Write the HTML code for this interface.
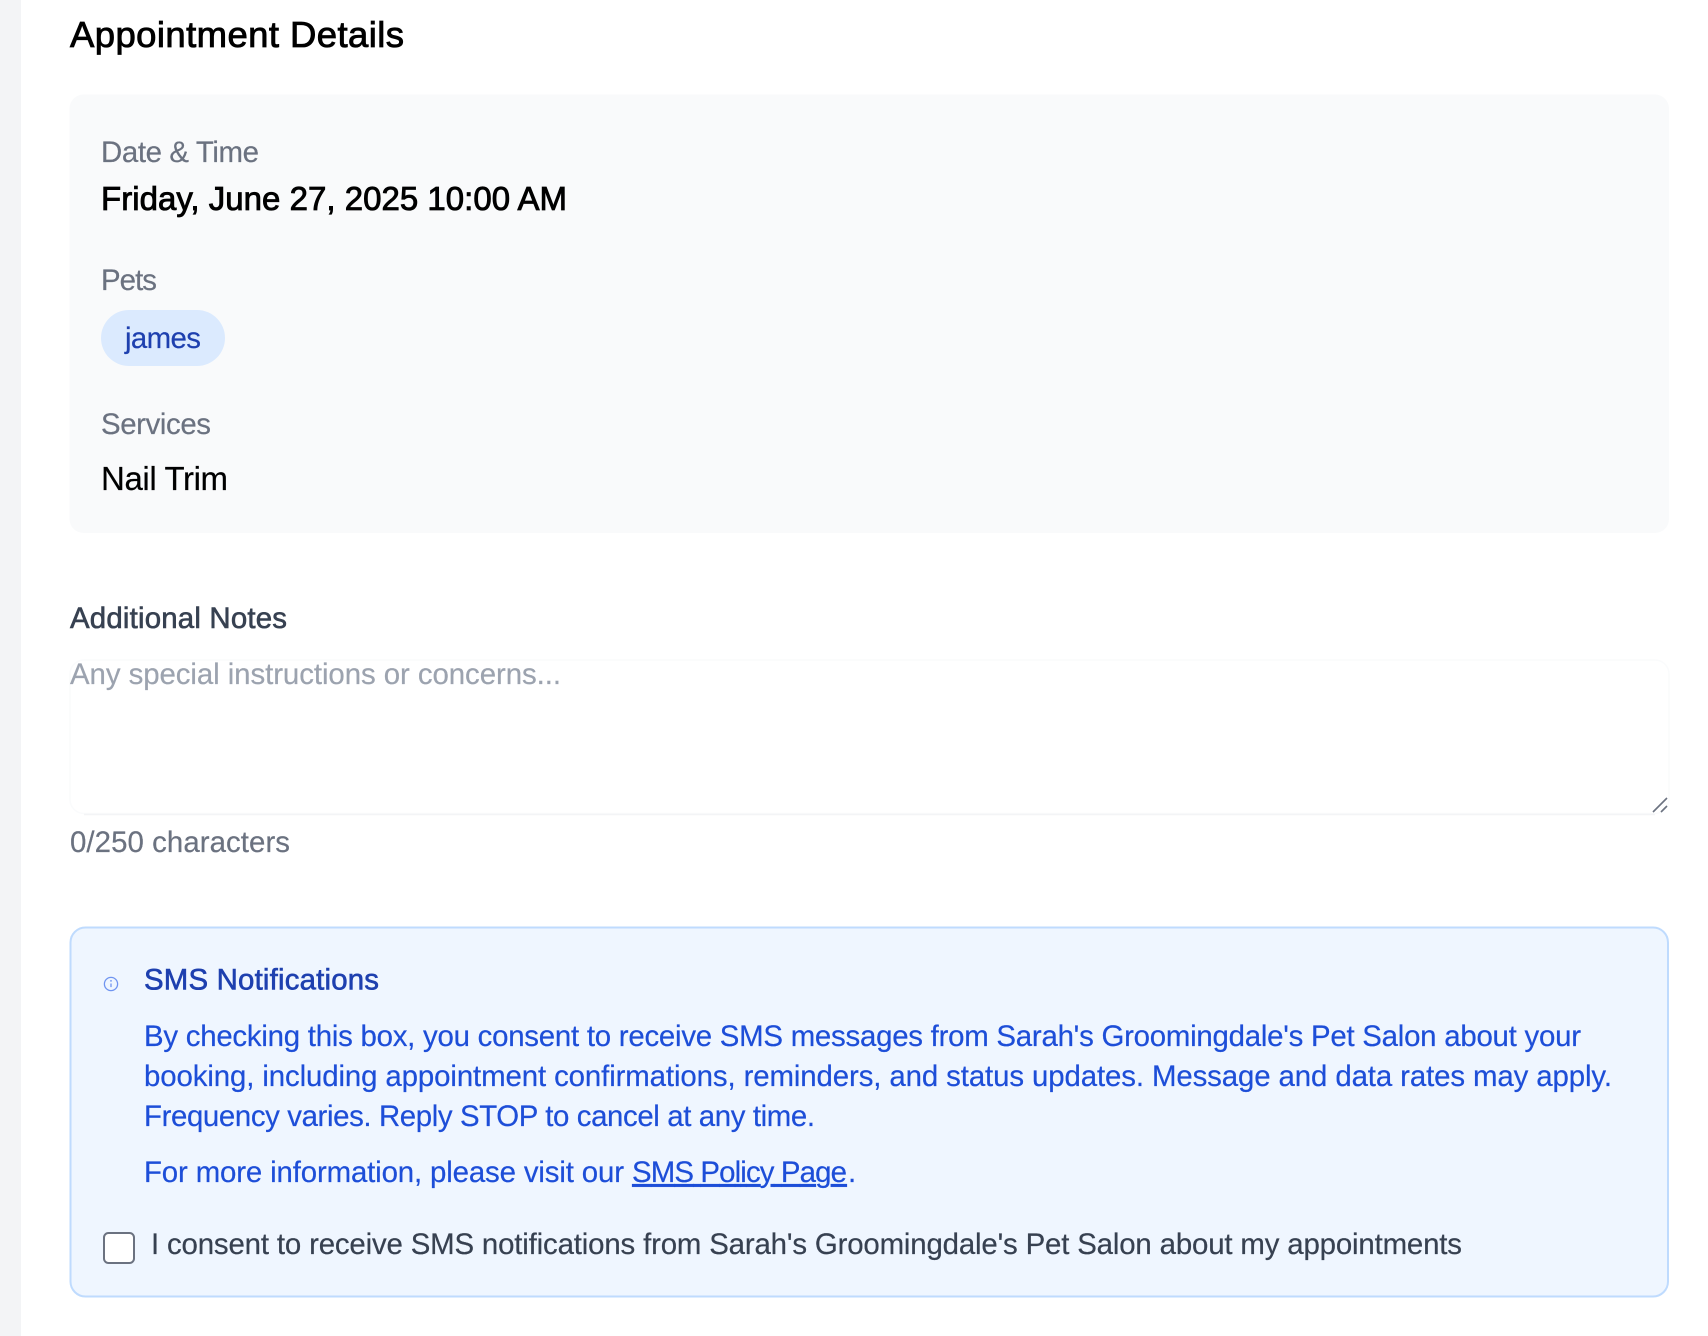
<!DOCTYPE html>
<html lang="en">
<head>
<meta charset="utf-8">
<title>Appointment Details</title>
<style>
html,body{margin:0;padding:0;background:#fff;width:1708px;height:1336px;overflow:hidden}
svg{display:block}
text{font-family:"Liberation Sans",Arial,sans-serif;font-size:29.4px;white-space:pre;stroke-width:.2px}
.m{stroke-width:.6px}
.h{stroke-width:.85px}
</style>
</head>
<body>
<svg width="1708" height="1336" viewBox="0 0 1708 1336" xmlns="http://www.w3.org/2000/svg">
<rect x="0" y="0" width="21" height="1336" fill="#f3f4f6"/>
<text x="70" y="47" fill="#000" stroke="#000" class="h" textLength="334" style="font-size:36.5px">Appointment Details</text>

<rect x="69.5" y="94.5" width="1599.5" height="438.5" rx="14" fill="#f9fafb"/>
<text x="101" y="162" fill="#6b7280" stroke="#6b7280" textLength="158">Date &amp; Time</text>
<text x="101" y="210" fill="#000" stroke="#000" class="h" style="font-size:33px" textLength="466">Friday, June 27, 2025 10:00 AM</text>
<text x="101" y="290" fill="#6b7280" stroke="#6b7280" textLength="56">Pets</text>
<rect x="101" y="310" width="124" height="56" rx="28" fill="#dbeafe"/>
<text x="125" y="348" fill="#1e40af" stroke="#1e40af" textLength="76">james</text>
<text x="101" y="434" fill="#6b7280" stroke="#6b7280" textLength="110">Services</text>
<text x="101" y="490" fill="#000" stroke="#000" style="font-size:33px" textLength="127">Nail Trim</text>

<text x="70" y="628" fill="#374151" stroke="#374151" class="m" textLength="217">Additional Notes</text>
<rect x="70" y="660" width="1599" height="153.5" rx="14" fill="#fff" stroke="#fafbfc" stroke-width="1.5"/>
<path d="M84 814.5H1655" stroke="#f3f4f6" stroke-width="1.5" fill="none"/>
<text x="70" y="684" fill="#9ca3af" stroke="#9ca3af" textLength="491">Any special instructions or concerns...</text>
<path d="M1653 812L1667 798M1661 812L1667 806" stroke="#6b7280" stroke-width="1.6" fill="none"/>
<text x="70" y="852" fill="#6b7280" stroke="#6b7280" textLength="220">0/250 characters</text>

<rect x="70.5" y="927.5" width="1597.5" height="369" rx="15" fill="#eff6ff" stroke="#bfdbfe" stroke-width="2"/>
<g fill="none" stroke="#6f94f0" stroke-width="1.3">
<circle cx="111" cy="984" r="6.6"/>
<path d="M111 983.5v3.6"/>
</g>
<circle cx="111" cy="980.9" r=".9" fill="#6f94f0"/>
<text x="144" y="989.5" fill="#1e40af" stroke="#1e40af" class="m" textLength="235">SMS Notifications</text>
<text x="144" y="1046" fill="#1d4ed8" stroke="#1d4ed8" textLength="1437">By checking this box, you consent to receive SMS messages from Sarah's Groomingdale's Pet Salon about your</text>
<text x="144" y="1086" fill="#1d4ed8" stroke="#1d4ed8" textLength="1468">booking, including appointment confirmations, reminders, and status updates. Message and data rates may apply.</text>
<text x="144" y="1126" fill="#1d4ed8" stroke="#1d4ed8" textLength="671">Frequency varies. Reply STOP to cancel at any time.</text>
<text x="144" y="1182" fill="#1d4ed8" stroke="#1d4ed8" textLength="480">For more information, please visit our</text>
<text x="632" y="1182" fill="#1d4ed8" stroke="#1d4ed8" text-decoration="underline" textLength="215">SMS Policy Page</text>
<text x="848" y="1182" fill="#1d4ed8" stroke="#1d4ed8">.</text>

<rect x="104" y="1233" width="30" height="30" rx="4.5" fill="#fff" stroke="#6b7280" stroke-width="2"/>
<text x="151" y="1254" fill="#374151" stroke="#374151" textLength="1311">I consent to receive SMS notifications from Sarah's Groomingdale's Pet Salon about my appointments</text>
</svg>
</body>
</html>
